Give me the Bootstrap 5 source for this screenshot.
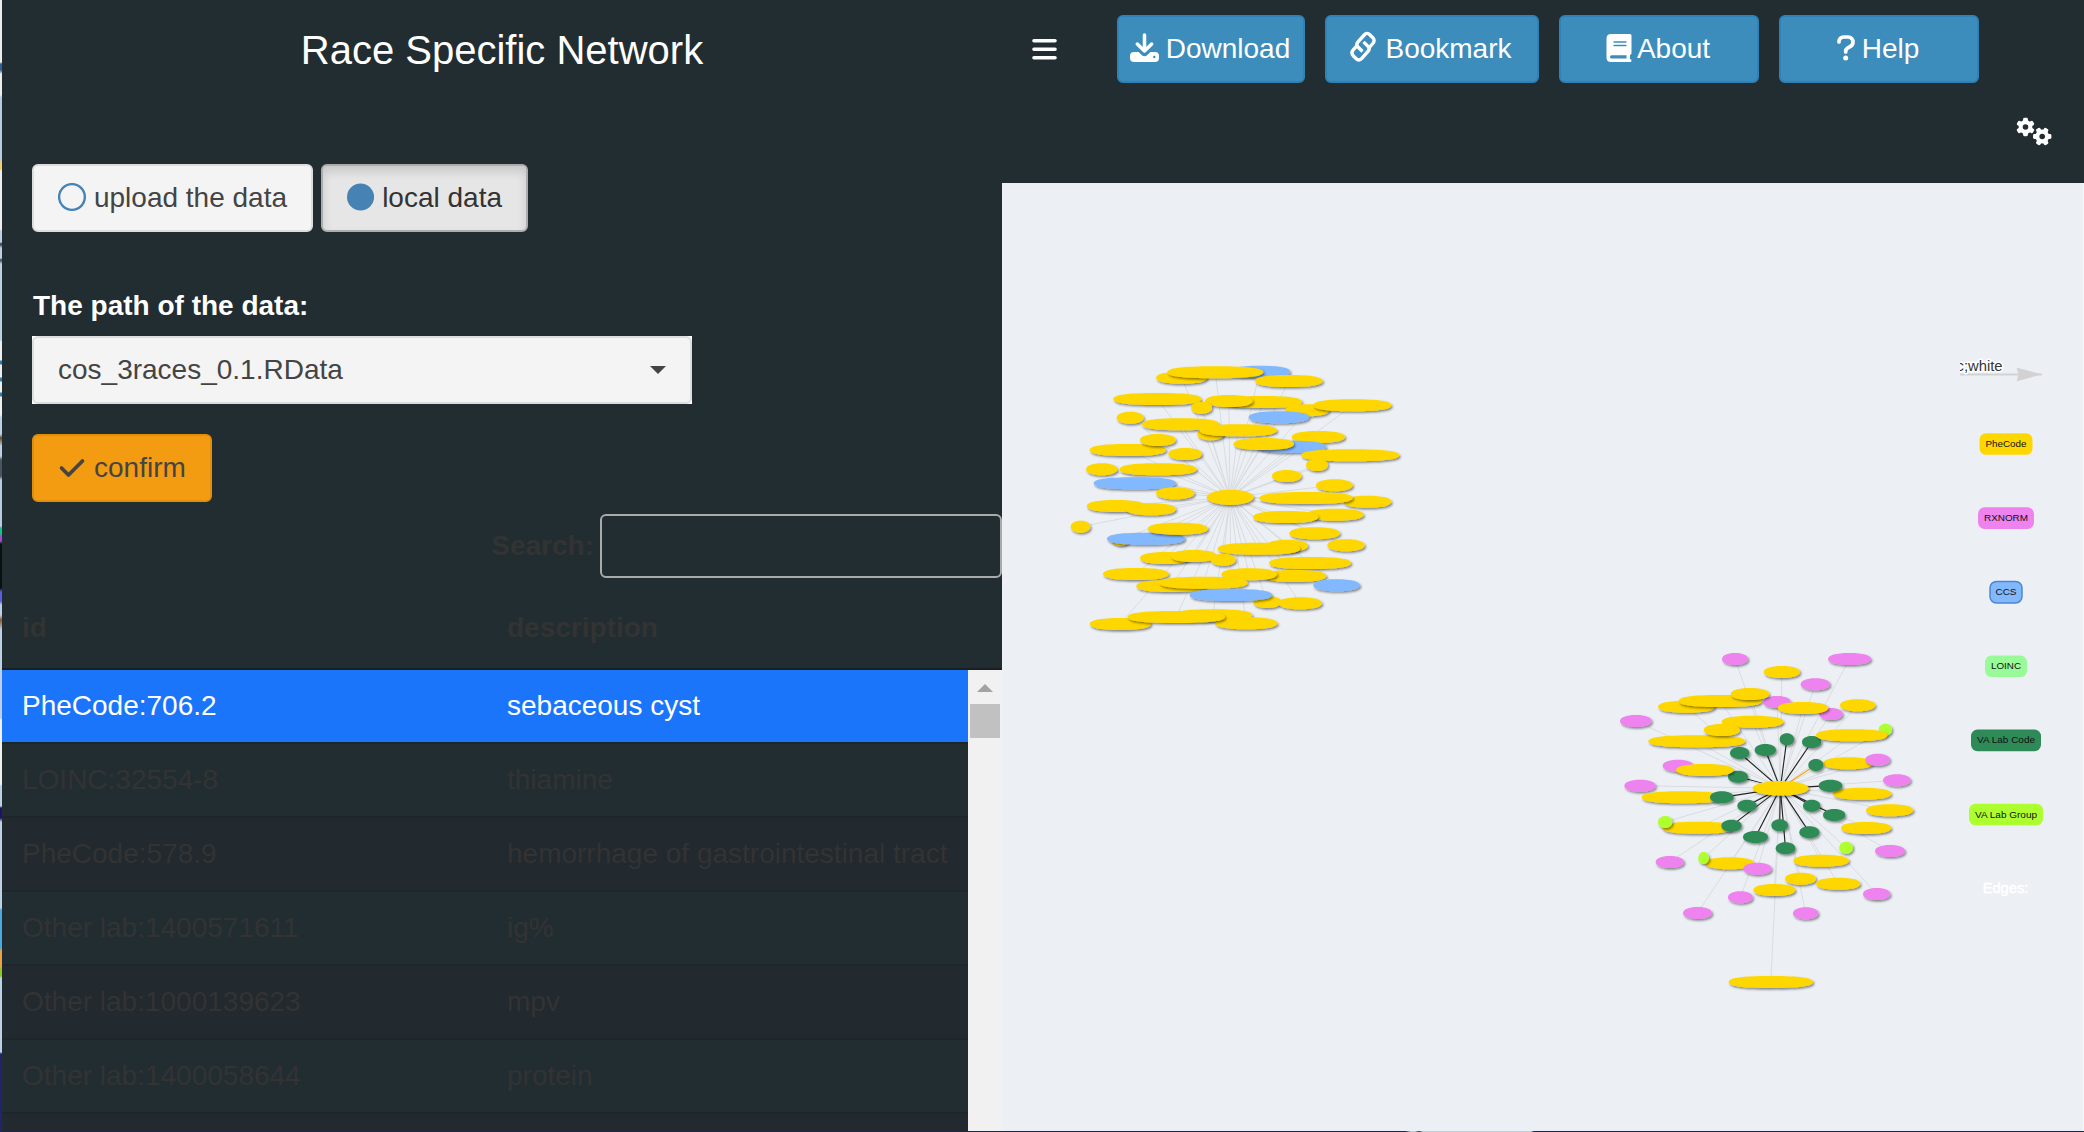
<!DOCTYPE html>
<html lang="en">
<head>
<meta charset="utf-8">
<meta name="viewport" content="width=device-width, initial-scale=1">
<title>Race Specific Network</title>
<link href="https://cdn.jsdelivr.net/npm/bootstrap@5.3.0/dist/css/bootstrap.min.css" rel="stylesheet">
<style>
html,body{height:100%}
body{font-family:"Liberation Sans",Arial,sans-serif;font-size:28px;line-height:40px;background:#222d32;color:#333}
.app-shell{height:1131px}
.edge-strip{width:2px;background:linear-gradient(#eceeec 0 62px,#335e9c 64px 70px,#eceeec 74px 95px,#b9cae2 97px 160px,#f2d06b 162px 169px,#eeefec 171px 229px,#bdd0e6 231px 242px,#333 244px,#bdd0e6 248px 258px,#444 260px,#bdd0e6 264px 340px,#eef0ee 342px 360px,#2f7fae 361px 364px,#eef0ee 365px 377px,#2f7fae 378px 381px,#eef0ee 382px 392px,#2f7fae 393px 396px,#eef0ee 397px 415px,#bdd0e6 417px 434px,#6b4c28 438px,#bdd0e6 446px 456px,#4c535c 460px 476px,#b9cae2 480px 526px,#13c48a 528px 534px,#a44bd0 536px 541px,#05120f 544px 588px,#5b5ee0 592px 601px,#bdd0e6 605px 615px,#8a5a32 620px,#bdd0e6 630px 718px,#f1f0ec 720px 784px,#bdd0e6 786px 806px,#1c1466 808px 818px,#bdd0e6 822px 908px,#4aa9dd 910px 948px,#f0a040 951px 967px,#8ac926 969px 976px,#bdd0e6 978px 1052px,#20246a 1054px)}
.bottom-strip{height:1px;background:linear-gradient(90deg,#1e2358 0 1405px,#bfcbe3 1411px 1415px,#333a60 1419px,#bfcbe3 1423px 1531px,#1e2358 1534px)}
.side-pane{width:1000px}
.side-title{height:100px;font-size:40px;color:#fff;line-height:100px}
.side-form{padding:64px 30px 0}
.side-form .btn,.top-btn{height:68px;font-size:28px;line-height:40px;border:2px solid;border-radius:6px}
.side-form .btn{padding:12px 24px}
.btn-plain,.btn-plain:hover{background:#f4f4f4;border-color:#ddd!important;color:#444}
.btn-pressed,.btn-pressed:hover{background:#e6e6e6;border-color:#adadad!important;color:#333;box-shadow:inset 0 6px 10px rgba(0,0,0,.125)}
.btn-confirm,.btn-confirm:hover{background:#f39c12;border-color:#e08e0b!important;color:#444}
.path-label{margin-top:54px;padding-left:1px;color:#fff;font-weight:700;height:50px}
.path-box{width:660px;height:68px;background:#fff}
.path-box .btn{width:100%}
.search-box{width:402px;height:64px;background:transparent;border:2px solid #aaa;border-radius:6px}
.table-head{height:99px;border-bottom:2px solid #171f23;font-weight:700}
.col-id{width:505px;flex:none;padding-left:20px}
.data-row{height:74px;border-bottom:2px solid #1d262b}
.data-row:nth-child(odd){background:#22292f}
.data-row.picked{background:#1a75fb;color:#fff;height:74px}
.scroll-rail{width:34px;background:#f1f1f1;padding:14px 2px 0}
.scroll-thumb{height:34px;background:#c1c1c1;margin-top:12px}
.top-bar{height:183px;padding:15px 0 0 30px}
.top-btn,.top-btn:hover{background:#3c8dbc;border-color:#2f82b7;color:#fff;padding:0 2px 0 0}
.net-pane{background:#ecf0f5}
svg{display:block}
</style>
</head>
<body class="overflow-hidden">
<div class="app-shell d-flex overflow-hidden">
  <div class="edge-strip flex-shrink-0"></div>
  <aside class="side-pane d-flex flex-column flex-shrink-0">
    <div class="side-title text-center text-nowrap">Race Specific Network</div>
    <div class="side-form">
      <div class="d-flex gap-2">
        <button class="btn btn-plain d-flex align-items-center gap-2" style="width:281px"><svg width="28" height="30" viewBox="0 0 28 30"><circle cx="14" cy="14" r="12.9" fill="none" stroke="#4682b4" stroke-width="2.4"/></svg><span class="text-nowrap">upload the data</span></button>
        <button class="btn btn-pressed d-flex align-items-center gap-2" style="width:207px"><svg width="28" height="30" viewBox="0 0 28 30"><circle cx="14" cy="14" r="14" fill="#4682b4"/></svg><span class="text-nowrap">local data</span></button>
      </div>
      <div class="path-label">The path of the data:</div>
      <div class="path-box"><button class="btn btn-plain d-flex align-items-center justify-content-between text-start">cos_3races_0.1.RData<svg width="16" height="8" viewBox="0 0 16 8"><path d="M0 0H16L8 8Z" fill="#444"/></svg></button></div>
      <button class="btn btn-confirm d-flex align-items-center gap-2" style="width:180px;margin-top:30px"><svg width="28" height="28" viewBox="0 0 28 28"><path d="M3.500 14l7 7L24.500 7" fill="none" stroke="#444" stroke-width="3.700" stroke-linecap="round" stroke-linejoin="round"/></svg>confirm</button>
    </div>
    <div class="d-flex justify-content-end align-items-center" style="padding-top:12px;gap:6px"><b>Search:</b><div class="search-box"></div></div>
    <div class="table-head d-flex" style="padding-top:30px"><div class="col-id">id</div><div>description</div></div>
    <div class="d-flex flex-grow-1 overflow-hidden">
      <div class="flex-grow-1">
        <div class="data-row picked d-flex align-items-center"><div class="col-id">PheCode:706.2</div><div>sebaceous cyst</div></div>
        <div class="data-row d-flex align-items-center"><div class="col-id">LOINC:32554-8</div><div>thiamine</div></div>
        <div class="data-row d-flex align-items-center"><div class="col-id">PheCode:578.9</div><div class="text-nowrap">hemorrhage of gastrointestinal tract</div></div>
        <div class="data-row d-flex align-items-center"><div class="col-id">Other lab:1400571611</div><div>ig%</div></div>
        <div class="data-row d-flex align-items-center"><div class="col-id">Other lab:1000139623</div><div>mpv</div></div>
        <div class="data-row d-flex align-items-center"><div class="col-id">Other lab:1400058644</div><div>protein</div></div>
        <div class="data-row"></div>
      </div>
      <div class="scroll-rail flex-shrink-0"><svg class="mx-auto" width="16" height="8" viewBox="0 0 16 8"><path d="M0 8L8 0L16 8Z" fill="#a3a3a3"/></svg><div class="scroll-thumb"></div></div>
    </div>
  </aside>
  <main class="d-flex flex-column flex-grow-1">
    <header class="top-bar flex-shrink-0">
      <div class="d-flex">
        <svg width="25" height="68" viewBox="0 0 25 68" style="margin-right:60px"><path d="M2 25.800H23M2 34.300H23M2 42.800H23" stroke="#fff" stroke-width="3.600" stroke-linecap="round"/></svg>
        <div class="d-flex" style="gap:20px">
          <button class="btn top-btn d-flex align-items-center justify-content-center" style="width:188px"><svg width="29" height="30" viewBox="0 0 29 30" style="margin-right:7px;margin-bottom:2px"><path d="M4 19h5l3.500 3.400q2 1.600 4 0L20 19h5a4 4 0 0 1 4 4v2a4 4 0 0 1-4 4H4a4 4 0 0 1-4-4v-2a4 4 0 0 1 4-4Z" fill="#fff"/><path d="M14.500 2V18M7.300 11l7.200 7 7.200-7" fill="none" stroke="#fff" stroke-width="3.500" stroke-linecap="round" stroke-linejoin="round"/><path d="M9 18.600l4 3.300q1.500 1 3 0l4-3.300" fill="none" stroke="#3c8dbc" stroke-width="1.300"/><circle cx="24.300" cy="24" r="1.200" fill="#3c8dbc"/></svg>Download</button>
          <button class="btn top-btn d-flex align-items-center justify-content-center" style="width:214px"><svg width="26" height="32" viewBox="0 0 26 32" style="margin-right:9px;margin-bottom:5px"><g fill="none" stroke="#fff" stroke-width="3.400" stroke-linejoin="round"><path d="M12.500 20.500L8 16Q5.800 13.500 7.800 11.200L14.200 4Q17 1 19.800 3.700L22.800 6.700Q25.300 9.500 22.800 12.500L18.300 17.600"/><path d="M13.500 10.900L18 15.400Q20.200 17.900 18.200 20.200L11.800 27.400Q9 30.400 6.200 27.700L3.200 24.700Q.7 21.900 3.200 18.900L7.700 13.800"/></g></svg>Bookmark</button>
          <button class="btn top-btn d-flex align-items-center justify-content-center" style="width:200px"><svg width="26" height="30" viewBox="0 0 26 30" style="margin-right:5px;margin-bottom:2px"><path d="M5 1H24q1.500 0 1.500 1.500V20q0 1.500-1.500 2V26q1.500 0 1.500 1.500T24 29H5Q.5 29 .5 24.500V5.500Q.5 1 5 1Z" fill="#fff"/><path d="M8 9H20M8 12.500H20" stroke="#3c8dbc" stroke-width="1.300" stroke-linecap="round"/><path d="M5.500 22.300H20.500V25.500H5.500Q4 25.500 4 23.900T5.500 22.300Z" fill="#3c8dbc"/></svg>About</button>
          <button class="btn top-btn d-flex align-items-center justify-content-center" style="width:200px"><svg width="18" height="26" viewBox="0 0 18 26" style="margin-right:7px;margin-bottom:2px"><path d="M2 7V6.500A4.500 4.500 0 0 1 6.500 2H11a5 5 0 0 1 5 5.200Q16 10 13 11.700L10.500 13.200Q8.700 14.300 8.700 16.500V17" fill="none" stroke="#fff" stroke-width="3.700" stroke-linecap="round"/><circle cx="8.700" cy="23" r="2.500" fill="#fff"/></svg>Help</button>
        </div>
      </div>
      <div class="d-flex justify-content-end" style="padding:34px 32px 0 0"><svg width="36" height="30" viewBox="0 0 36 30"><g id="gears" fill="#fff"></g><circle cx="9.500" cy="10" r="2.800" fill="#222d32"/><circle cx="26.200" cy="19.500" r="2.800" fill="#222d32"/></svg></div>
    </header>
    <section class="net-pane flex-grow-1">
      <svg id="net" width="1082" height="948" viewBox="1002 183 1082 948" font-family="Liberation Sans, Arial, sans-serif">
        <defs>
          <filter id="soft" x="-20%" y="-40%" width="150%" height="220%"><feDropShadow dx="4" dy="5" stdDeviation="3.600" flood-color="#000" flood-opacity=".45"/></filter>
          <clipPath id="cut"><rect x="1960" y="350" width="90" height="40"/></clipPath>
        </defs>
        <g id="left" transform="translate(1060 350) scale(.33333)"></g>
        <g id="right" transform="translate(1600 630) scale(.33333)"></g>
        <g clip-path="url(#cut)"><path d="M1960 374.500H2042" stroke="#d2d2d2" stroke-width="2.200"/><path d="M2042 374.300L2016.500 367.500L2018.500 374.300L2016.500 381.500Z" fill="#d2d2d2"/><text x="2002.500" y="370.800" font-size="14" textLength="46" lengthAdjust="spacingAndGlyphs" text-anchor="end" fill="#343434" stroke="#fff" stroke-width="3" paint-order="stroke" stroke-linejoin="round">c;white</text></g>
        <g id="legend" font-size="9.500" text-anchor="middle"></g>
        <text x="2005.500" y="893" font-size="14" textLength="45.500" lengthAdjust="spacingAndGlyphs" text-anchor="middle" fill="#fff" stroke="#fff" stroke-width=".5">Edges:</text>
        <path d="M2083.500 183V1131" stroke="#f6f8fb"/>
      </svg>
    </section>
  </main>
</div>
<div class="bottom-strip"></div>
<script src="https://cdn.jsdelivr.net/npm/bootstrap@5.3.0/dist/js/bootstrap.bundle.min.js"></script>
<script>
const NS = 'http://www.w3.org/2000/svg';
function add(parent, tag, attrs, text) {
  const e = document.createElementNS(NS, tag);
  for (const k in attrs) e.setAttribute(k, attrs[k]);
  if (text) e.textContent = text;
  parent.appendChild(e);
  return e;
}
const fills = {Y: '#ffd700', B: '#82b8fd', P: '#ee82ee', G: '#2e8b57', L: '#adff2f'};
// Each node: [left, right, centre y, kind, height]; later nodes lie on top.
function drawCluster(id, hub, nodes) {
  const g = document.getElementById(id);
  for (const [a, b, y, kind] of nodes) {
    const dark = kind === 'G', orange = dark && y === 405;
    add(g, 'line', {x1: hub[0], y1: hub[1], x2: (a + b) / 2, y2: y,
      stroke: orange ? '#ffa500' : dark ? '#222' : '#d9dcdf', 'stroke-width': dark ? 3.4 : 3});
  }
  for (const [a, b, y, kind = 'Y', h = 36] of nodes) {
    const rx = (b - a) / 2, ry = h / 2, cx = (a + b) / 2;
    // Wide nodes keep their full thickness further out than a plain ellipse.
    const kx = h > 40 ? .56 : Math.min(.72, .54 + rx / 700), ky = h > 40 ? .56 : Math.min(.66, .55 + rx / 1000);
    add(g, 'path', {fill: fills[kind], filter: 'url(#soft)', d:
      `M${cx - rx} ${y}C${cx - rx} ${y - ry * ky} ${cx - rx * kx} ${y - ry} ${cx} ${y - ry}C${cx + rx * kx} ${y - ry} ${cx + rx} ${y - ry * ky} ${cx + rx} ${y}C${cx + rx} ${y + ry * ky} ${cx + rx * kx} ${y + ry} ${cx} ${y + ry}C${cx - rx * kx} ${y + ry} ${cx - rx} ${y + ry * ky} ${cx - rx} ${y}Z`});
  }
}
drawCluster('left', [510, 442], [
  [508,691,65,'B'],[288,442,83],[322,610,67],[585,788,93],[160,424,147],[495,726,156],[435,578,153],[393,456,173],
  [676,808,181],[760,994,166],[170,251,203],[566,748,202,'B'],[412,492,253],[246,477,223],[418,651,241],
  [695,855,261],[590,799,290,'B'],[520,702,282],[723,1018,316],[89,318,300],[240,347,270],[325,426,312],[738,804,345],
  [78,172,358],[179,410,358],[636,724,378],[101,348,400,'B'],[288,403,430],[768,878,406],[850,994,455],[598,878,444],
  [80,255,468],[197,348,478],[740,911,494],[579,775,501],[32,91,530],[153,210,569],[141,375,566,'B'],[263,444,536],
  [688,840,550],[802,914,586],[620,744,587],[473,720,596],[240,390,624],[332,470,618],[452,527,629],[627,873,639],
  [129,326,672],[610,799,678],[484,651,673],[760,900,706,'B'],[229,440,708],[298,563,698],[580,664,756],[389,636,735,'B'],
  [655,786,760],[340,577,796],[465,652,820],[89,273,822],[203,495,801],[440,581,442,'Y',46]
]);
drawCluster('right', [541, 475], [
  [366,444,87,'P'],[684,813,87,'P'],[602,690,163,'P'],[490,572,216,'P'],[658,728,252,'P'],[60,155,273,'P'],[188,280,407,'P'],
  [73,167,467,'P'],[849,932,451,'P'],[825,915,663,'P'],[167,252,696,'P'],[384,458,802,'P'],[249,336,849,'P'],[579,655,850,'P'],
  [789,871,792,'P'],[836,876,299,'L'],[606,664,336,'G'],[384,444,440,'G'],
  [491,600,126],[720,826,226],[533,685,234],[174,345,230],[236,486,213],[392,508,192],[365,550,275],[145,435,334],[311,420,300],
  [648,862,316],[228,401,420],[125,372,502],[669,820,400],[698,874,491],[798,940,541],[723,874,594],[187,400,593],[315,462,700],
  [580,747,692],[555,648,746],[648,781,761],[460,586,780],[386,639,1056],
  [796,870,389,'P'],[430,515,716,'P'],[174,217,576,'L'],[295,327,684,'L'],[718,759,653,'L'],
  [539,582,328,'G'],[464,528,360,'G'],[390,448,369,'G'],[625,670,405,'G'],[656,727,467,'G'],[330,401,502,'G'],[412,470,527,'G'],
  [609,661,527,'G'],[669,736,555,'G'],[364,425,587,'G'],[429,504,621,'G'],[514,564,586,'G'],[598,658,607,'G'],[527,586,655,'G'],
  [458,626,475,'Y',44]
]);
[['PheCode',53,'#ffd700'],['RXNORM',56,'#ee82ee'],['CCS',32,'#82b8fd'],['LOINC',42,'#98fb98'],['VA Lab Code',70,'#2e8b57'],['VA Lab Group',74,'#adff2f']]
.forEach(([name, w, fill], i) => {
  const g = document.getElementById('legend'), y = 444 + i * 74.1;
  add(g, 'rect', {x: 2006 - w / 2, y: y - 10.8, width: w, height: 21.6, rx: 6.5, fill, stroke: name === 'CCS' ? '#4b87d0' : 'none', 'stroke-width': 1.5});
  add(g, 'text', {x: 2006, y: y + 3, fill: '#111', textLength: w - (name === 'CCS' ? 11 : 12), lengthAdjust: 'spacingAndGlyphs'}, name);
});
// Six-toothed gears: a disc with round-ended spokes.
[[9.5, 10, 30], [26.2, 19.5, 0]].forEach(([x, y, turn]) => {
  const g = document.getElementById('gears');
  add(g, 'circle', {cx: x, cy: y, r: 6.9});
  for (let i = 0; i < 3; i++)
    add(g, 'rect', {x: x - 9.2, y: y - 2.4, width: 18.4, height: 4.8, rx: 1.4, transform: `rotate(${turn + i * 60} ${x} ${y})`});
});
</script>
</body>
</html>
